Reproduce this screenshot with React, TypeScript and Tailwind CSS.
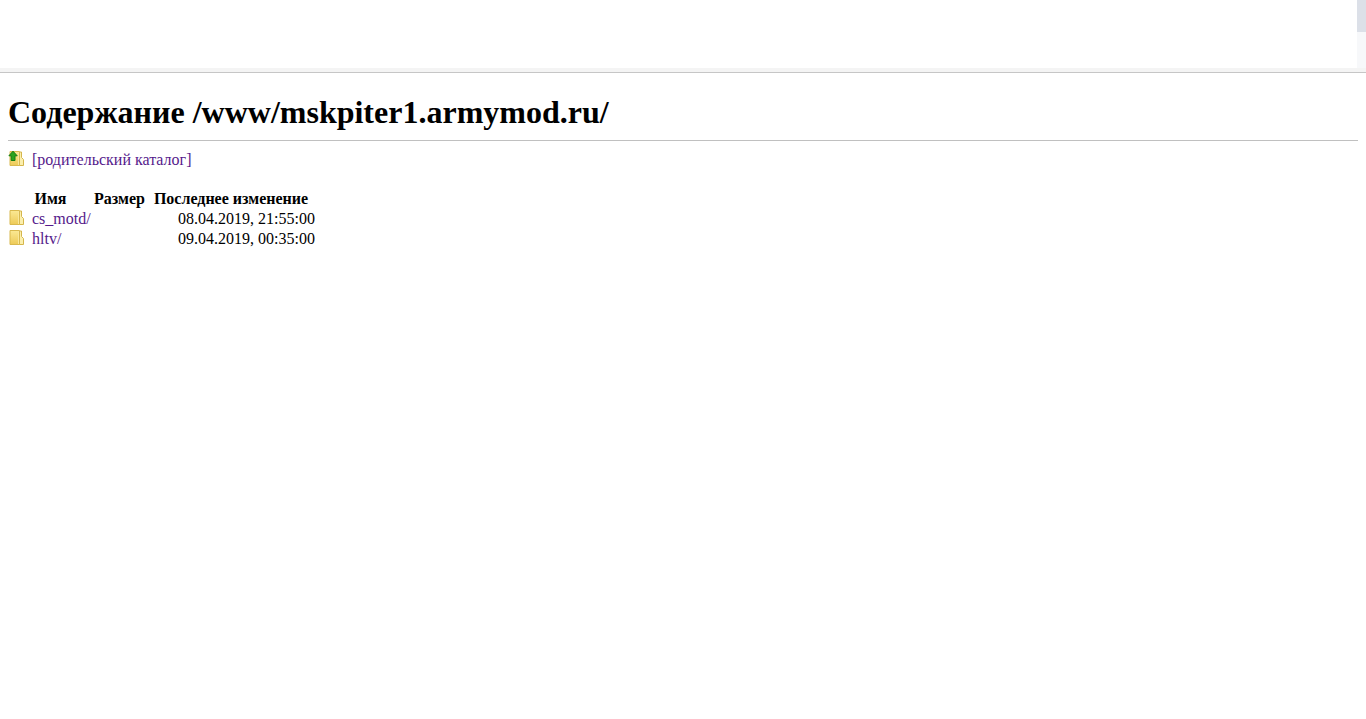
import type { ReactNode } from 'react';

interface Entry {
    name: string;
    size: string;
    modified: string;
}

const ENTRIES: Entry[] = [
    { name: 'cs_motd/', size: '', modified: '08.04.2019, 21:55:00' },
    { name: 'hltv/', size: '', modified: '09.04.2019, 00:35:00' },
];

const FolderIcon = ({ up = false }: { up?: boolean }) => (
    <svg className="h-4 w-4 shrink-0" viewBox="0 0 16 16" aria-hidden="true">
        <defs>
            <linearGradient id="folder" x1="0" y1="0" x2="0" y2="1">
                <stop offset="0" stopColor="#fbe994" />
                <stop offset="1" stopColor="#edca58" />
            </linearGradient>
        </defs>
        {/* back flap with its tab */}
        <path d="M11.5 2h2v5.5l2 2v6h-4z" fill="#fbefae" stroke="#d5b64c" />
        {/* front cover */}
        <path d="M2 1.5h9.5v14H2z" fill="url(#folder)" stroke="#d9b94f" />
        <path d="M10.5 2v13" stroke="#f9e79a" />
        {up && <path d="M5 1.2l4.2 4.6H7v4.7H3.2V5.8H.9z" fill="#2ca31c" stroke="#127c10" />}
    </svg>
);

const FileLink = ({ up, children }: { up?: boolean; children: ReactNode }) => (
    <a href="#" className="inline-flex gap-2 text-[#551a8b]">
        <FolderIcon up={up} />
        {children}
    </a>
);

const TopBar = () => (
    <div className="border-b border-[#c6c6c6]">
        <div className="flex h-[68px] justify-end">
            <div className="w-[9px] bg-[#f7f8fa]">
                <div className="h-8 bg-[#dce0e8]" />
            </div>
        </div>
        <div className="h-1 bg-[#f4f4f4]" />
    </div>
);

export default function App() {
    return (
        <div className="min-h-screen bg-white font-['Liberation_Serif',serif] text-base leading-5 text-black">
            <TopBar />
            <main className="px-2 pt-5">
                <h1 className="mb-2 border-b border-[#c0c0c0] pb-2 text-[32px] leading-[39px] font-bold">
                    Содержание /www/mskpiter1.armymod.ru/
                </h1>
                <div className="mb-[19px] flex pt-px">
                    <FileLink up>[родительский каталог]</FileLink>
                </div>
                <table className="table-fixed">
                    <thead>
                        <tr>
                            <th className="w-[85px] p-0">Имя</th>
                            <th className="w-[53px] p-0">Размер</th>
                            <th className="w-[170px] p-0 whitespace-nowrap">Последнее изменение</th>
                        </tr>
                    </thead>
                    <tbody>
                        {ENTRIES.map((entry) => (
                            <tr key={entry.name} className="h-5">
                                <td className="p-0">
                                    <div className="flex">
                                        <FileLink>{entry.name}</FileLink>
                                    </div>
                                </td>
                                <td className="p-0">{entry.size}</td>
                                <td className="pr-px text-right whitespace-nowrap">{entry.modified}</td>
                            </tr>
                        ))}
                    </tbody>
                </table>
            </main>
        </div>
    );
}
